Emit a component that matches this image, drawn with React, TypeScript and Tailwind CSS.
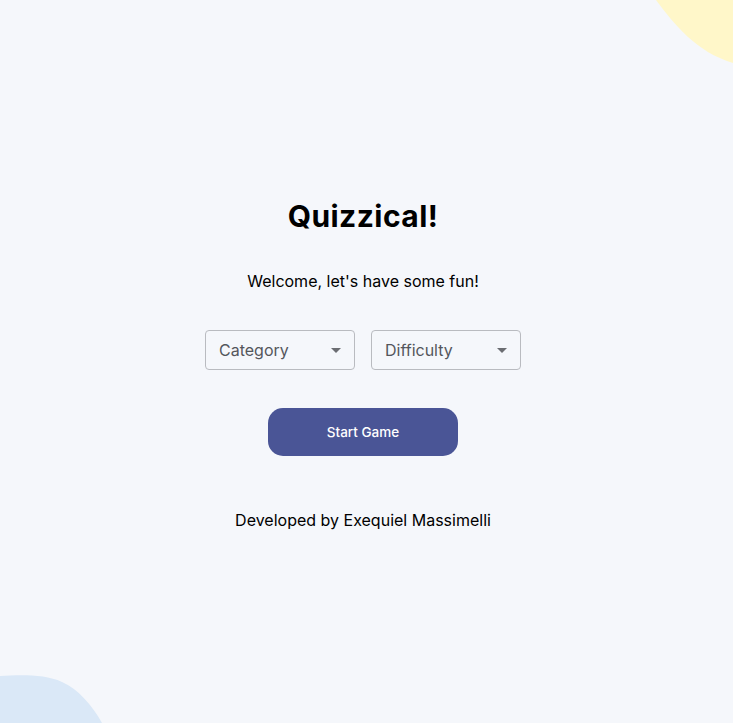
import React from "react";

const Select = ({ label }: { label: string }) => (
  <div className="flex h-10 w-[150px] items-center justify-between rounded-[4px] border border-[#b9bbc0] bg-[#f5f7fb] pl-[13px] pr-[13px] text-base text-[#54565c]">
    <span>{label}</span>
    <span className="h-0 w-0 border-x-[5px] border-t-[5px] border-x-transparent border-t-[#6b6d72]" />
  </div>
);

export default function App() {
  return (
    <div
      className="relative h-[723px] w-full overflow-hidden bg-[#f5f7fb] text-black"
      style={{ fontFamily: "Inter, 'Noto Sans', sans-serif" }}
    >
      <svg className="absolute right-0 top-0" width="77" height="63" viewBox="0 0 77 63">
        <path d="M0 0 C 18 24, 40 52, 77 63 L77 0 Z" fill="#fff7c9" />
      </svg>
      <svg className="absolute bottom-0 left-0" width="102" height="48" viewBox="0 0 102 48">
        <path d="M0 1 C 20 0, 45 -1, 62 7 C 78 14, 92 30, 102 48 L0 48 Z" fill="#dae8f7" />
      </svg>

      <div className="relative flex w-[726px] flex-col items-center pt-[196px]">
        <h1 className="text-[30px] font-bold leading-10 tracking-[0.015em]">Quizzical!</h1>
        <p className="mt-[33px] text-base leading-6">Welcome, let's have some fun!</p>
        <div className="mt-[37px] flex gap-4">
          <Select label="Category" />
          <Select label="Difficulty" />
        </div>
        <button className="mt-[38px] h-12 w-[190px] rounded-[15px] bg-[#4a5596] text-[13.5px] font-medium text-white">
          Start Game
        </button>
        <p className="mt-[52px] text-base leading-6">Developed by Exequiel Massimelli</p>
      </div>
    </div>
  );
}
